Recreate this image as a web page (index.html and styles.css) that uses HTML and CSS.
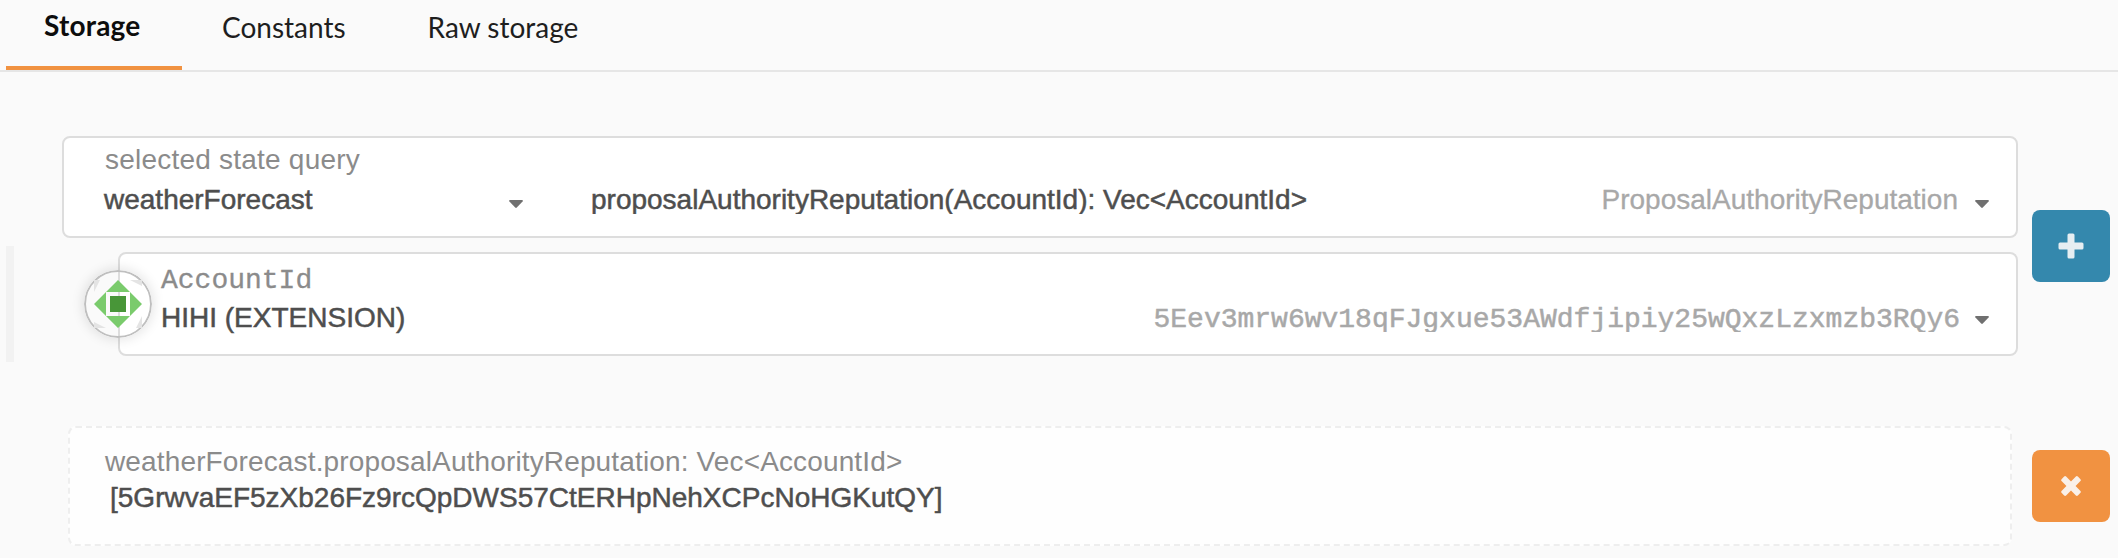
FILE: index.html
```html
<!DOCTYPE html>
<html lang="en">
<head>
<meta charset="utf-8">
<title>Chain state</title>
<link rel="stylesheet" href="styles.css">
</head>
<body>
<nav class="tabs">
  <a class="tab active">Storage</a>
  <a class="tab">Constants</a>
  <a class="tab">Raw storage</a>
</nav>
<main>
  <section class="row query">
    <div class="content">
      <div class="box state">
        <div class="label light">selected state query</div>
        <div class="selects">
          <div class="module">
            <span class="value">weatherForecast</span>
            <svg class="caret" viewBox="0 0 14 8"><path d="M1 0h12q1.400.2.6 1.400L7.800 7.500q-.8.8-1.600 0L.4 1.400Q-.4.2 1 0z"/></svg>
          </div>
          <div class="method">
            <span class="value clip">proposalAuthorityReputation(AccountId): Vec&lt;AccountId&gt;</span>
            <span class="value clip hint">ProposalAuthorityReputation</span>
            <svg class="caret" viewBox="0 0 14 8"><path d="M1 0h12q1.400.2.6 1.400L7.800 7.500q-.8.8-1.600 0L.4 1.400Q-.4.2 1 0z"/></svg>
          </div>
        </div>
      </div>
      <div class="params">
        <div class="box account">
          <svg class="avatar" viewBox="0 0 68 68">
            <circle cx="34" cy="34" r="33" fill="none" stroke="#bfbfbf" stroke-width="2"/>
            <g fill="#e4e4e4">
              <path d="M10 10h6L10 22zM46 10h12v6zM10 52v6h12zM58 46v12h-6z"/>
            </g>
            <path fill="#7acb6c" d="M34 10l12 12H22zM58 34L46 46V22zM34 58L22 46h24zM10 34l12-12v24z"/>
            <path fill="#489638" d="M26 26h16v16H26z"/>
          </svg>
          <div class="label mono">AccountId</div>
          <div class="account-row">
            <span class="value">HIHI (EXTENSION)</span>
            <span class="value clip mono address">5Eev3mrw6wv18qFJgxue53AWdfjipiy25wQxzLzxmzb3RQy6</span>
            <svg class="caret" viewBox="0 0 14 8"><path d="M1 0h12q1.400.2.6 1.400L7.800 7.500q-.8.8-1.600 0L.4 1.400Q-.4.2 1 0z"/></svg>
          </div>
        </div>
      </div>
    </div>
    <button class="btn add" aria-label="Add query">
      <svg width="26" height="26" viewBox="0 0 26 26"><path d="M11 .5h4q1.500 0 1.500 1.500v7.500H24q1.500 0 1.500 1.500v4q0 1.500-1.500 1.500h-7.500V24q0 1.500-1.500 1.500h-4q-1.500 0-1.500-1.500v-7.500H2Q.5 16.500.5 15v-4Q.5 9.500 2 9.500h7.500V2Q9.500.5 11 .5z"/></svg>
    </button>
  </section>
  <section class="row">
    <div class="result">
      <div class="label light path">weatherForecast.proposalAuthorityReputation: Vec&lt;AccountId&gt;</div>
      <div class="value output">[5GrwvaEF5zXb26Fz9rcQpDWS57CtERHpNehXCPcNoHGKutQY]</div>
    </div>
    <button class="btn close" aria-label="Remove result">
      <svg width="26" height="26" viewBox="0 0 26 26"><path transform="rotate(45 13 13)" d="M11 .5h4q1.500 0 1.500 1.500v7.500H24q1.500 0 1.500 1.500v4q0 1.500-1.500 1.500h-7.500V24q0 1.500-1.500 1.500h-4q-1.500 0-1.500-1.500v-7.500H2Q.5 16.500.5 15v-4Q.5 9.500 2 9.500h7.500V2Q9.500.5 11 .5z"/></svg>
    </button>
  </section>
</main>
</body>
</html>
```
FILE: styles.css
```css
* { box-sizing: border-box; }
body {
  margin: 0;
  height: 558px;
  overflow: hidden;
  background: #fafafa;
  color: #4e4e4e;
  font: 28px/28px "Liberation Sans", Arial, sans-serif;
}
.tabs {
  display: flex;
  height: 72px;
  padding-left: 6px;
  border-bottom: 2px solid #e6e6e6;
  font-family: Lato, sans-serif;
  color: #1e1e1e;
}
.tab { padding: 13px 40px 0; white-space: nowrap; }
.tab.active {
  width: 176px;
  padding: 11px 0 0 38px;
  letter-spacing: .2px;
  border-bottom: 4px solid #f19241;
  font-weight: 700;
  color: #0d0d0d;
}
.tab + .tab + .tab { padding-left: 42px; }
.row {
  display: grid;
  grid-template-columns: 1fr 78px;
  align-items: center;
  column-gap: 14px;
  padding-right: 8px;
}
.query { padding: 0 8px 0 6px; margin-top: 58px; }
.content { padding-top: 6px; }
.box { border: 2px solid #ddd; border-radius: 8px; background: #fff; }
.state { height: 102px; margin-left: 56px; padding: 8px 27px 0 40px; }
.label { color: #8b8b8b; white-space: nowrap; }
.light { padding-left: 1px; letter-spacing: .22px; }
.path { letter-spacing: .14px; }
.value { display: block; white-space: nowrap; -webkit-text-stroke: .5px currentColor; }
.clip { overflow: hidden; }
.selects { display: flex; margin-top: 12px; }
.module { display: flex; justify-content: space-between; width: 419px; }
.method { display: flex; flex: 1; margin-left: 68px; }
.caret { width: 14px; height: 8px; fill: #707070; margin-top: 14px; }
.hint, .address { margin-left: auto; color: #a8a8a8; }
.hint { -webkit-text-stroke-width: .3px; }
.method .caret { margin-left: 17px; }
.account-row .caret { margin: 12px 0 0 15px; }
.params { height: 116px; margin-top: 8px; border-left: 8px solid #f2f2f2; padding: 6px 0 6px 104px; }
.account { position: relative; height: 104px; padding: 13px 27px 0 41px; }
.account .label { -webkit-text-stroke: .3px currentColor; }
.avatar {
  position: absolute;
  left: -36px;
  top: 16px;
  width: 68px;
  height: 68px;
  border-radius: 50%;
  box-shadow: 0 0 12px 2px rgba(0, 0, 0, .1);
}
.mono { font-family: "Liberation Mono", "Courier New", monospace; }
.account-row { display: flex; margin-top: 9px; }
.address { line-height: 32px; height: 28px; }
.result {
  height: 120px;
  margin-left: 68px;
  padding: 20px 34px;
  border: 2px dashed #eee;
  border-radius: 8px;
  background: #fefefe;
}
.query + .row { margin-top: 64px; column-gap: 20px; }
.output { height: 36px; margin-top: 8px; padding-left: 6px; }
.btn {
  display: grid;
  place-items: center;
  width: 78px;
  height: 72px;
  padding: 0;
  border: 0;
  border-radius: 8px;
}
.btn svg { fill: #e6eef2; }
.add { background: #3488ad; }
.close { background: #f19241; }
.btn.close svg { width: 24px; height: 24px; fill: #faf0e8; }
```
